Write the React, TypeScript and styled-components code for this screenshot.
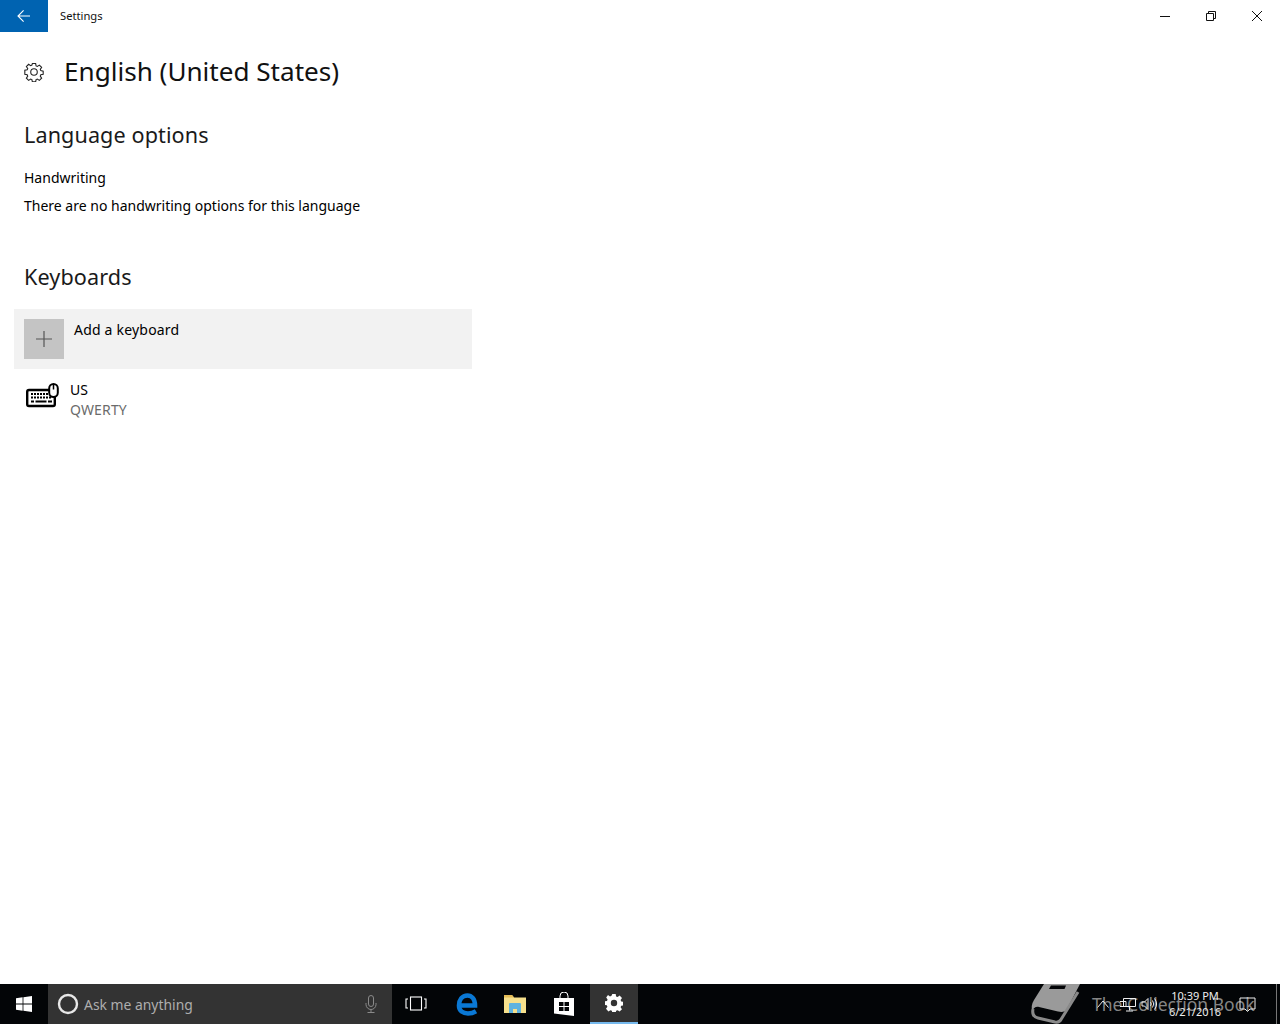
import React from "react";
import styled, { createGlobalStyle } from "styled-components";

const Global = createGlobalStyle`
  html, body { margin: 0; padding: 0; height: 100%; background: #fff; }
  #root { height: 100%; }
  * { box-sizing: border-box; }
`;
const FONT = `"Noto Sans", "Open Sans", sans-serif`;

const Screen = styled.div`
  width: 1280px; height: 1024px; display: flex; flex-direction: column;
  font-family: ${FONT}; color: #000; overflow: hidden;
`;
const TitleBar = styled.header`height: 32px; display: flex; align-items: center; flex: none;`;
const BackButton = styled.div`
  width: 48px; height: 32px; background: #0063b1; display: flex; align-items: center; justify-content: center;
`;
const AppName = styled.span`margin-left: 12px; font-size: 11.2px; line-height: 32px; color: #111; flex: 1;`;
const WinButton = styled.div`width: 46px; height: 32px; display: flex; align-items: center; justify-content: center;`;
const Main = styled.main`flex: 1; padding: 22px 0 0 24px; min-height: 0;`;
const PageHead = styled.div`display: flex; align-items: center; height: 36px; gap: 20px;`;
const PageTitle = styled.h1`margin: 0 0 2px; font-size: 26.1px; font-weight: 400; line-height: 34px; color: #111;`;
const Section = styled.h2<{ $top: number }>`
  margin: ${p => p.$top}px 0 0; font-size: 21.6px; font-weight: 400; line-height: 30px; letter-spacing: .1px; color: #1a1a1a;
`;
const Body = styled.p<{ $top: number }>`
  margin: ${p => p.$top}px 0 0; font-size: 14px; line-height: 20px;
`;
const AddRow = styled.div`
  width: 458px; height: 60px; margin: 17px 0 0 -10px; padding: 10px; background: #f2f2f2; display: flex; gap: 10px;
`;
const AddTile = styled.div`
  width: 40px; height: 40px; background: #c4c4c4; display: flex; align-items: center; justify-content: center;
`;
const AddLabel = styled.span`font-size: 14px; line-height: 20px; margin-top: 1px; letter-spacing: .2px;`;
const KeyboardRow = styled.div`display: flex; gap: 10px; margin-top: 11px;`;
const KeyIcon = styled.div`width: 36px; height: 40px; padding: 3px 0 0 2px; flex: none;`;
const KeyText = styled.div`display: flex; flex-direction: column; font-size: 14px; line-height: 20px;`;
const KeySub = styled.span`color: #6b6b6b; letter-spacing: .15px;`;

const Taskbar = styled.footer`
  position: relative; height: 40px; flex: none; background: #030507; display: flex; align-items: stretch; color: #fff;
`;
const Start = styled.div`width: 48px; display: flex; align-items: center; justify-content: center;`;
const Search = styled.div`
  width: 344px; background: #333; display: flex; align-items: center; padding: 0 14px 0 9px; color: #aeaeae; font-size: 13.9px;
`;
const SearchText = styled.span`margin-left: 5px; flex: 1;`;
const TaskIcon = styled.div<{ $active?: boolean; $left?: number }>`
  width: 48px; margin-left: ${p => p.$left ?? 0}px; display: flex; align-items: center; justify-content: center;
  background: ${p => (p.$active ? "#333" : "transparent")};
  border-bottom: ${p => (p.$active ? "2px solid #76b9ed" : "0")};
`;
const Tray = styled.div`
  position: relative; z-index: 1; margin-left: auto; display: flex; align-items: center; padding-right: 3px;
`;
const TrayIcon = styled.div<{ $w: number }>`
  width: ${p => p.$w}px; height: 40px; display: flex; align-items: center; justify-content: center;
`;
const Clock = styled.div`
  width: 60px; margin-left: 4px; text-align: center; font-size: 11px; line-height: 16px; color: #eee; white-space: nowrap;
`;
const NotifyGap = styled.div`width: 8px;`;
const ShowDesktop = styled.div`width: 1px; height: 40px; background: #777; margin-left: 15px;`;
const Watermark = styled.div`
  position: absolute; left: 1030px; top: 0; height: 40px; width: 230px; display: flex; align-items: center; gap: 12px;
  color: #858585; font-size: 17.5px; white-space: nowrap; overflow: hidden; pointer-events: none;
`;
const BookArt = styled.svg`flex: none;`;

const Gear = () => (
  <svg width="20" height="20" viewBox="0 0 22 22" fill="none" stroke="#222" strokeWidth="1.2">
    <path d="M9.200 1.700h3.600l.5 2.600 1.400.6 2.200-1.500 2.500 2.500-1.500 2.200.6 1.400 2.600.5v3.600l-2.600.5-.6 1.400 1.500 2.200-2.500 2.500-2.200-1.500-1.400.6-.5 2.600H9.200l-.5-2.600-1.400-.6-2.200 1.500-2.500-2.500 1.500-2.200-.6-1.400-2.600-.5V9.100l2.600-.5.6-1.400-1.500-2.200 2.500-2.500 2.200 1.500 1.400-.6z" />
    <circle cx="11" cy="11" r="3.600" />
  </svg>
);

const KeyboardMouse = () => (
  <svg width="33" height="25" viewBox="0 0 33 25">
    <path d="M24 7H3A1.800 1.800 0 0 0 1.200 8.800v12.400A1.800 1.800 0 0 0 3 23h24a1.800 1.800 0 0 0 1.800-1.800V14" fill="none" stroke="#000" strokeWidth="2.400" />
    <rect x="23.200" y="1" width="8.600" height="13" rx="4.300" fill="#fff" stroke="#000" strokeWidth="2" />
    <path d="M27.500 2v4.500" stroke="#000" strokeWidth="1.500" />
    <path d="M5 11h19M5 14.500h21" stroke="#000" strokeWidth="1.800" strokeDasharray="2 1" />
    <path d="M5 18.500h3M9.500 18.500h11M22 18.500h4" stroke="#000" strokeWidth="1.800" />
  </svg>
);

const App = () => (
  <Screen>
    <Global />
    <TitleBar>
      <BackButton>
        <svg width="14" height="14" viewBox="0 0 14 14" fill="none" stroke="#fff" strokeWidth="1.100">
          <path d="M13 7H1.200M6.600 1.400 1 7l5.600 5.600" />
        </svg>
      </BackButton>
      <AppName>Settings</AppName>
      <WinButton>
        <svg width="10" height="10" viewBox="0 0 10 10"><path d="M0 5.500h10" stroke="#111" /></svg>
      </WinButton>
      <WinButton>
        <svg width="10" height="10" viewBox="0 0 10 10" fill="none" stroke="#111">
          <path d="M.5 2.500h7v7h-7zM2.500 2.500v-2h7v7h-2" />
        </svg>
      </WinButton>
      <WinButton>
        <svg width="10" height="10" viewBox="0 0 10 10" stroke="#111"><path d="M0 0l10 10M10 0 0 10" /></svg>
      </WinButton>
    </TitleBar>
    <Main>
      <PageHead>
        <Gear />
        <PageTitle>English (United States)</PageTitle>
      </PageHead>
      <Section $top={30}>Language options</Section>
      <Body $top={18}>Handwriting</Body>
      <Body $top={8}>There are no handwriting options for this language</Body>
      <Section $top={46}>Keyboards</Section>
      <AddRow>
        <AddTile>
          <svg width="18" height="18" viewBox="0 0 18 18" stroke="#555" strokeWidth="1.200"><path d="M9 1v16M1 9h16" /></svg>
        </AddTile>
        <AddLabel>Add a keyboard</AddLabel>
      </AddRow>
      <KeyboardRow>
        <KeyIcon><KeyboardMouse /></KeyIcon>
        <KeyText>
          <span>US</span>
          <KeySub>QWERTY</KeySub>
        </KeyText>
      </KeyboardRow>
    </Main>
    <Taskbar>
      <Start>
        <svg width="16" height="16" viewBox="0 0 16 16" fill="#fff">
          <path d="M0 2.200 6.600 1.300v6.300H0zM7.400 1.200 16 0v7.600H7.400zM0 8.400h6.600v6.300L0 13.800zM7.400 8.400H16V16l-8.600-1.200z" />
        </svg>
      </Start>
      <Search>
        <svg width="22" height="22" viewBox="0 0 22 22" fill="none"><circle cx="11" cy="11" r="9" stroke="#e8e8e8" strokeWidth="2.400" /></svg>
        <SearchText>Ask me anything</SearchText>
        <svg width="14" height="18" viewBox="0 0 14 18" fill="none" stroke="#8a8a8a">
          <rect x="4.500" y=".5" width="5" height="11" rx="2.500" />
          <path d="M2 8v1.500a5 5 0 0 0 10 0V8M7 14.500v3M3.500 17.500h7" />
        </svg>
      </Search>
      <TaskIcon>
        <svg width="22" height="16" viewBox="0 0 22 16" fill="none" stroke="#fff" strokeWidth="1.100">
          <rect x="5.500" y="1" width="11" height="13" />
          <path d="M3 3H1v9h2M19 3h2v9h-2" />
        </svg>
      </TaskIcon>
      <TaskIcon $left={3}>
        <svg width="22" height="24" viewBox="0 0 22 24" fill="none">
          <path stroke="#0a78d4" strokeWidth="4.600" d="M5 13.500H19C19 7 15.500 3.500 11.500 3.500 6 3.500 3 8 3 13.500 3 19 7 21.500 12 21.500 15 21.500 17.800 20.600 20 19.300" />
        </svg>
      </TaskIcon>
      <TaskIcon>
        <svg width="22" height="20" viewBox="0 0 22 20">
          <path fill="#f6e08c" d="M0 1h8l2 2.500h12V19H0z" />
          <path fill="#e3bb55" d="M0 1h8l2 2.500H0z" />
          <path fill="#5fb3e0" d="M6 9h10a1 1 0 0 1 1 1v9h-4v-4H9v4H5v-9a1 1 0 0 1 1-1z" />
        </svg>
      </TaskIcon>
      <TaskIcon $left={1}>
        <svg width="20" height="24" viewBox="0 0 20 24">
          <path d="M6 6V4a4 4 0 0 1 8 0v2" fill="none" stroke="#fff" strokeWidth="1" />
          <path fill="#fff" d="M0 6h20v18L0 21.500z" />
          <path fill="#030507" d="M5 10h4.500v4H5zM10.500 10H15v4h-4.500zM5 15h4.500v4H5zM10.500 15H15v4h-4.500z" />
        </svg>
      </TaskIcon>
      <TaskIcon $active $left={2}>
        <svg width="18" height="18" viewBox="0 0 18 18">
          <path fill="#fff" fillRule="evenodd" d="M7.300 0h3.400l.4 2.400 1.500.6 2-1.400 2.400 2.400-1.400 2 .6 1.500 2.400.4v3.400l-2.400.4-.6 1.500 1.400 2-2.400 2.400-2-1.400-1.500.6-.4 2.400H7.300l-.4-2.400-1.500-.6-2 1.400L1 14.800l1.400-2-.6-1.500L-.4 10.900V7.300l2.400-.4.600-1.500-1.400-2L3 1l2 1.400 1.500-.6zM9 5.800a3.200 3.200 0 1 0 0 6.400 3.200 3.200 0 0 0 0-6.400z" />
        </svg>
      </TaskIcon>
      <Watermark>
        <BookArt width="50" height="40" viewBox="0 0 50 40">
          <path fill="#9a9a9a" d="M14 0H50L37 25C35 28 32 28.500 28 27.500L9 23C6 22.300 3 24 2.500 27 1 24 1.500 20 4 16Z" />
          <path fill="#030507" d="M21 1.500H36L34.500 5H19Z" />
          <path fill="none" stroke="#8a8a8a" strokeWidth="3" d="M3 25C2 30 4 33 8 34L25 38C28 38.500 30 37.500 31 35.500L48 8" />
        </BookArt>
        <span>The Collection Book</span>
      </Watermark>
      <Tray>
        <TrayIcon $w={24}>
          <svg width="12" height="8" viewBox="0 0 12 8" fill="none" stroke="#eee"><path d="M.5 7.500 6 1l5.500 6.500" /></svg>
        </TrayIcon>
        <TrayIcon $w={24}>
          <svg width="17" height="15" viewBox="0 0 17 15" fill="none" stroke="#eee">
            <path d="M4.500 1.500h12v8h-12zM10.500 9.500v4M7 14h7M1 4.500h6v5H1" />
          </svg>
        </TrayIcon>
        <TrayIcon $w={22}>
          <svg width="18" height="14" viewBox="0 0 18 14" fill="none" stroke="#eee">
            <path d="M1 5v4h2.500L7 12.500v-11L3.500 5zM9.500 5.200a3 3 0 0 1 0 3.600M11.500 3.500a6 6 0 0 1 0 7M13.500 1.500a9 9 0 0 1 0 11" />
          </svg>
        </TrayIcon>
        <Clock>10:39 PM<br />6/21/2016</Clock>
        <NotifyGap />
        <TrayIcon $w={28}>
          <svg width="17" height="15" viewBox="0 0 17 15" fill="none" stroke="#eee">
            <path d="M1 1h15v11h-5l-2.500 2.500L6 12H1z" />
          </svg>
        </TrayIcon>
        <ShowDesktop />
      </Tray>
    </Taskbar>
  </Screen>
);

export default App;
